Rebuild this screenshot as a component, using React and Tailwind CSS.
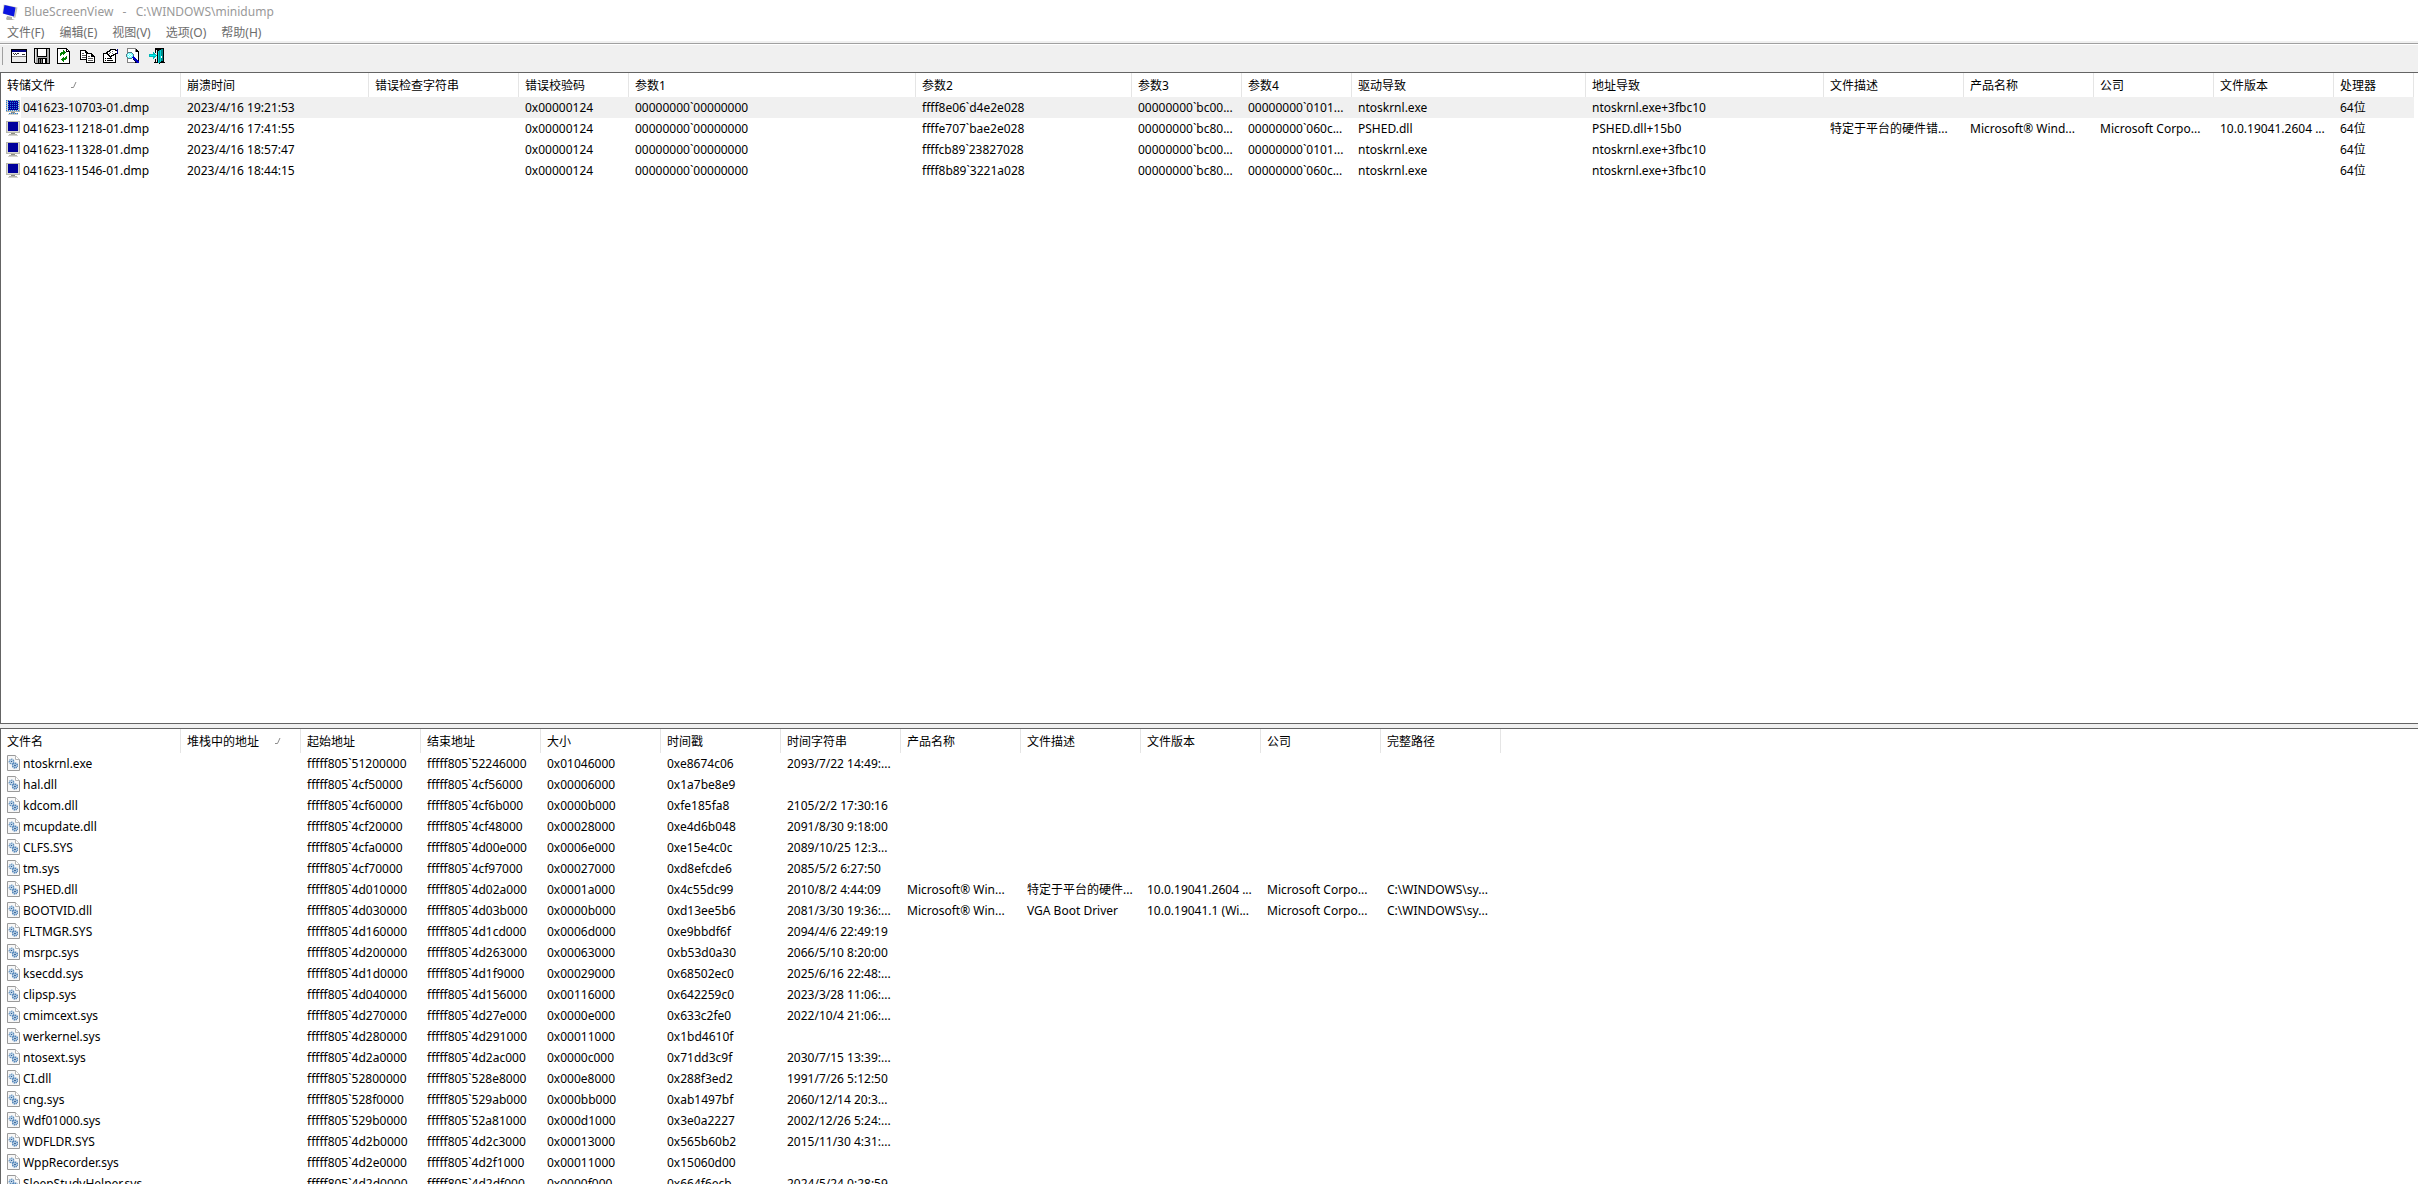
const DUMP_COLUMNS = [
  { label: '转储文件', width: 'w-[180px]', sorted: true },
  { label: '崩溃时间', width: 'w-[188px]' },
  { label: '错误检查字符串', width: 'w-[150px]' },
  { label: '错误校验码', width: 'w-[110px]' },
  { label: '参数1', width: 'w-[287px]' },
  { label: '参数2', width: 'w-[216px]' },
  { label: '参数3', width: 'w-[110px]' },
  { label: '参数4', width: 'w-[110px]' },
  { label: '驱动导致', width: 'w-[234px]' },
  { label: '地址导致', width: 'w-[238px]' },
  { label: '文件描述', width: 'w-[140px]' },
  { label: '产品名称', width: 'w-[130px]' },
  { label: '公司', width: 'w-[120px]' },
  { label: '文件版本', width: 'w-[120px]' },
  { label: '处理器', width: 'w-[80px]' },
];

const DUMPS = [
  ['041623-10703-01.dmp', '2023/4/16 19:21:53', '', '0x00000124', '00000000`00000000', 'ffff8e06`d4e2e028', '00000000`bc00...', '00000000`0101...', 'ntoskrnl.exe', 'ntoskrnl.exe+3fbc10', '', '', '', '', '64位'],
  ['041623-11218-01.dmp', '2023/4/16 17:41:55', '', '0x00000124', '00000000`00000000', 'ffffe707`bae2e028', '00000000`bc80...', '00000000`060c...', 'PSHED.dll', 'PSHED.dll+15b0', '特定于平台的硬件错...', 'Microsoft® Wind...', 'Microsoft Corpo...', '10.0.19041.2604 ...', '64位'],
  ['041623-11328-01.dmp', '2023/4/16 18:57:47', '', '0x00000124', '00000000`00000000', 'ffffcb89`23827028', '00000000`bc00...', '00000000`0101...', 'ntoskrnl.exe', 'ntoskrnl.exe+3fbc10', '', '', '', '', '64位'],
  ['041623-11546-01.dmp', '2023/4/16 18:44:15', '', '0x00000124', '00000000`00000000', 'ffff8b89`3221a028', '00000000`bc80...', '00000000`060c...', 'ntoskrnl.exe', 'ntoskrnl.exe+3fbc10', '', '', '', '', '64位'],
];

const DRIVER_COLUMNS = [
  { label: '文件名', width: 'w-[180px]' },
  { label: '堆栈中的地址', width: 'w-[120px]', sorted: true },
  { label: '起始地址', width: 'w-[120px]' },
  { label: '结束地址', width: 'w-[120px]' },
  { label: '大小', width: 'w-[120px]' },
  { label: '时间戳', width: 'w-[120px]' },
  { label: '时间字符串', width: 'w-[120px]' },
  { label: '产品名称', width: 'w-[120px]' },
  { label: '文件描述', width: 'w-[120px]' },
  { label: '文件版本', width: 'w-[120px]' },
  { label: '公司', width: 'w-[120px]' },
  { label: '完整路径', width: 'w-[120px]' },
];

const DRIVERS = [
  ['ntoskrnl.exe', '', 'fffff805`51200000', 'fffff805`52246000', '0x01046000', '0xe8674c06', '2093/7/22 14:49:...'],
  ['hal.dll', '', 'fffff805`4cf50000', 'fffff805`4cf56000', '0x00006000', '0x1a7be8e9', ''],
  ['kdcom.dll', '', 'fffff805`4cf60000', 'fffff805`4cf6b000', '0x0000b000', '0xfe185fa8', '2105/2/2 17:30:16'],
  ['mcupdate.dll', '', 'fffff805`4cf20000', 'fffff805`4cf48000', '0x00028000', '0xe4d6b048', '2091/8/30 9:18:00'],
  ['CLFS.SYS', '', 'fffff805`4cfa0000', 'fffff805`4d00e000', '0x0006e000', '0xe15e4c0c', '2089/10/25 12:3...'],
  ['tm.sys', '', 'fffff805`4cf70000', 'fffff805`4cf97000', '0x00027000', '0xd8efcde6', '2085/5/2 6:27:50'],
  ['PSHED.dll', '', 'fffff805`4d010000', 'fffff805`4d02a000', '0x0001a000', '0x4c55dc99', '2010/8/2 4:44:09', 'Microsoft® Win...', '特定于平台的硬件...', '10.0.19041.2604 ...', 'Microsoft Corpo...', 'C:\\WINDOWS\\sy...'],
  ['BOOTVID.dll', '', 'fffff805`4d030000', 'fffff805`4d03b000', '0x0000b000', '0xd13ee5b6', '2081/3/30 19:36:...', 'Microsoft® Win...', 'VGA Boot Driver', '10.0.19041.1 (Wi...', 'Microsoft Corpo...', 'C:\\WINDOWS\\sy...'],
  ['FLTMGR.SYS', '', 'fffff805`4d160000', 'fffff805`4d1cd000', '0x0006d000', '0xe9bbdf6f', '2094/4/6 22:49:19'],
  ['msrpc.sys', '', 'fffff805`4d200000', 'fffff805`4d263000', '0x00063000', '0xb53d0a30', '2066/5/10 8:20:00'],
  ['ksecdd.sys', '', 'fffff805`4d1d0000', 'fffff805`4d1f9000', '0x00029000', '0x68502ec0', '2025/6/16 22:48:...'],
  ['clipsp.sys', '', 'fffff805`4d040000', 'fffff805`4d156000', '0x00116000', '0x642259c0', '2023/3/28 11:06:...'],
  ['cmimcext.sys', '', 'fffff805`4d270000', 'fffff805`4d27e000', '0x0000e000', '0x633c2fe0', '2022/10/4 21:06:...'],
  ['werkernel.sys', '', 'fffff805`4d280000', 'fffff805`4d291000', '0x00011000', '0x1bd4610f', ''],
  ['ntosext.sys', '', 'fffff805`4d2a0000', 'fffff805`4d2ac000', '0x0000c000', '0x71dd3c9f', '2030/7/15 13:39:...'],
  ['CI.dll', '', 'fffff805`52800000', 'fffff805`528e8000', '0x000e8000', '0x288f3ed2', '1991/7/26 5:12:50'],
  ['cng.sys', '', 'fffff805`528f0000', 'fffff805`529ab000', '0x000bb000', '0xab1497bf', '2060/12/14 20:3...'],
  ['Wdf01000.sys', '', 'fffff805`529b0000', 'fffff805`52a81000', '0x000d1000', '0x3e0a2227', '2002/12/26 5:24:...'],
  ['WDFLDR.SYS', '', 'fffff805`4d2b0000', 'fffff805`4d2c3000', '0x00013000', '0x565b60b2', '2015/11/30 4:31:...'],
  ['WppRecorder.sys', '', 'fffff805`4d2e0000', 'fffff805`4d2f1000', '0x00011000', '0x15060d00', ''],
  ['SleepStudyHelper.sys', '', 'fffff805`4d2d0000', 'fffff805`4d2df000', '0x0000f000', '0x664f6ecb', '2024/5/24 0:28:59'],
];

const MENUS = ['文件(F)', '编辑(E)', '视图(V)', '选项(O)', '帮助(H)'];

const Icon = ({ children }) => (
  <svg width="16" height="16" viewBox="0 0 16 16" shapeRendering="crispEdges" className="block shrink-0" aria-hidden="true">
    {children}
  </svg>
);

const AppIcon = () => (
  <svg width="16" height="16" viewBox="0 0 16 16" className="block shrink-0" aria-hidden="true">
    <path d="M5 12l5 1v2l3 1H5l-1-1z" fill="#b0b0a8" />
    <path d="M13.500 3l2 .5-2 10-2 .5z" fill="#c4c4bc" />
    <path d="M1.500 0.500L14 3l-1.500 10L0.500 9.500z" fill="#d2d2c8" />
    <path d="M2.500 1L13.500 3.500l-1.500 9L1 9.500z" fill="#0a14e0" />
  </svg>
);

const DumpIcon = ({ selected }) => (
  <Icon>
    <path d="M1 1h14v12H1z" fill="#b9b9ae" />
    <path d="M2 2h12v10H2z" fill="#d8d8d0" />
    <path d="M3 2h10v9H3z" fill="#00009c" />
    <path d="M6 13h4v1H6z" fill="#8c8c84" />
    <path d="M4 14h8v1H4z" fill="#b4b4ac" />
    <path d="M3 15h10v1H3z" fill="#d4d4cc" />
    {selected && (
      <>
        <path d="M1 1.500h14M1 3.500h14M1 5.500h14M1 7.500h14M1 9.500h14M1 11.500h14M4 14.500h9" stroke="#2a7fd8" strokeDasharray="1 1" />
      </>
    )}
  </Icon>
);

const DriverIcon = () => (
  <svg width="16" height="16" viewBox="0 0 16 16" className="block shrink-0" aria-hidden="true">
    <path d="M2.500 0.500h8l4 4v11h-12z" fill="#f7f7f7" stroke="#9a9a9a" />
    <path d="M10.500 0.500v4h4" fill="#fff" stroke="#b4b4b4" />
    <circle cx="6.500" cy="6.500" r="2.200" fill="#dcebf7" stroke="#5f8fbe" strokeWidth="1.400" strokeDasharray="1.200 0.600" />
    <circle cx="6.500" cy="6.500" r="0.800" fill="#2f5f96" />
    <circle cx="10" cy="10.500" r="2.400" fill="#dcebf7" stroke="#3f76b0" strokeWidth="1.400" strokeDasharray="1.200 0.500" />
    <circle cx="10" cy="10.500" r="0.900" fill="#24538a" />
  </svg>
);

const WindowIcon = () => (
  <Icon>
    <path d="M0 1h16v14H0z" fill="#000" />
    <path d="M1 4h14v10H1z" fill="#fff" />
    <path d="M1 2h14v2H1z" fill="#000080" />
    <path d="M2 5h1v1H2zM4 5h1v1H4zM6 5h2v1H6zM3 6h1v1H3zM5 6h1v1H5zM11 6h3v1h-3z" fill="#333" />
    <path d="M1 8h14v1H1z" fill="#808080" />
    <path d="M1 9h14v5H1z" fill="#ececec" />
  </Icon>
);

const SaveIcon = () => (
  <Icon>
    <path d="M0 0h16v16H1v-1H0z" fill="#000" />
    <path d="M1 1h14v14H1z" fill="#a8a8a8" />
    <path d="M1 1h1v13H1z" fill="#e4e4e4" />
    <path d="M3 0h10v9H3z" fill="#000" />
    <path d="M4 1h8v7H4z" fill="#fff" />
    <path d="M4 10h9v5H4z" fill="#000" />
    <path d="M5 11h1v4H5zM7 11h1v4H7z" fill="#808080" />
    <path d="M9 11h2v4H9z" fill="#fff" />
  </Icon>
);

const RefreshIcon = () => (
  <Icon>
    <path d="M0 0h10v1h1v1h1v1h1v13H0z" fill="#000" />
    <path d="M1 1h8v3h3v11H1z" fill="#fff" />
    <path d="M10 2h1v1h-1z" fill="#fff" />
    <path d="M3 5h1V4h2V2h1v1h1v1h1v1H8v1H7v1H6V6H5v1H4v1H3z" fill="#008000" />
    <path d="M10 11H9v1H7v2H6v-1H5v-1H4v-1h1v-1h1V9h1v1h1V9h1V8h1z" fill="#008000" />
  </Icon>
);

const CopyIcon = () => (
  <Icon>
    <path d="M0 2h6v1h1v1h1v8H0z" fill="#000" />
    <path d="M1 3h4v2h2v6H1z" fill="#fff" />
    <path d="M2 5h2v1H2zM2 7h4v1H2zM2 9h4v1H2z" fill="#555" />
    <path d="M6 5h6v1h1v1h1v1h1v7H6z" fill="#000" />
    <path d="M7 6h4v3h3v5H7z" fill="#fff" />
    <path d="M8 8h2v1H8zM8 10h5v1H8zM8 12h5v1H8z" fill="#555" />
  </Icon>
);

const PropertiesIcon = () => (
  <Icon>
    <path d="M0 5h13v10H0z" fill="#000" />
    <path d="M1 6h11v8H1z" fill="#fff" />
    <path d="M2 10h1v1H2zM4 10h5v1H4zM2 12h1v1H2zM4 12h6v1H4z" fill="#000" />
    <path d="M7 1h6v1h1V1h1v5h-2v1h-2v1H9v1H8v1H7V9H6V8H5V7H4V6H3V4h1V3h2V2h1z" fill="#000" />
    <path d="M8 2h4v1h2v2h-2v1h-2v1H8v1H7V7H6V6H5V4h2V3h1z" fill="#fff" />
    <path d="M7 4h1v1H7zM9 3h1v1H9zM9 5h1v1H9zM6 5h1v1H6z" fill="#666" />
    <path d="M14 1h1v5h-1z" fill="#000080" />
  </Icon>
);

const FindIcon = () => (
  <Icon>
    <path d="M1 0h9v1h1v1h1v1h1v12H1z" fill="#808080" />
    <path d="M2 1h7v3h3v10H2z" fill="#fff" />
    <path d="M10 1h1v1h1v1h1v12h-4v-1h3V4h-2z" fill="#000" />
    <path d="M2 4h4v1h1v1h1v3H7v1H6v1H2v-1H1V9H0V6h1V5h1z" fill="#507c88" />
    <path d="M2 5h4v1h1v3H6v1H2V9H1V6h1z" fill="#7ff" />
    <path d="M2 6h1v1H2zM4 6h1v1H4zM3 7h1v1H3zM5 7h1v1H5zM2 8h1v1H2zM4 8h1v1H4z" fill="#fff" />
    <path d="M7 8h1v1h1v1h1v1h1v1h1v1h1v2h-2v-1h-1v-1H9v-1H8v-1H7v-1H6V9h1z" fill="#0000c8" />
    <path d="M7 11h1v1h1v1h1v1h1v1h-1v-1H9v-1H8v-1H7z" fill="#000050" />
  </Icon>
);

const ExitIcon = () => (
  <Icon>
    <path d="M6 0h9v14h1v1h-5v1h-1v-1H5v-1h1v-3h1v3h1V2H7v3H6z" fill="#000" />
    <path d="M9 3h1V2h2V1h2v12h-2v1h-1v1H9z" fill="#008c8c" />
    <path d="M9 3h1v12H9zM11 2h1v12h-1z" fill="#00d8d8" />
    <path d="M12 8h1v2h-1z" fill="#fff" />
    <path d="M4 4h1v1h1v1h1v1h1v1H7v1H6v1H5v1H4V9H0V6h4z" fill="#00b8b8" />
    <path d="M1 7h6v1H1z" fill="#00f0f0" />
  </Icon>
);

const TOOLS = [
  { label: '高级选项', icon: WindowIcon },
  { label: '保存', icon: SaveIcon },
  { label: '刷新', icon: RefreshIcon },
  { label: '复制', icon: CopyIcon },
  { label: '属性', icon: PropertiesIcon },
  { label: '查找', icon: FindIcon },
  { label: '退出', icon: ExitIcon },
];

const ListView = ({ label, columns, rows, icon: RowIcon, selectedIndex }) => (
  <table aria-label={label} className="w-px table-fixed border-collapse text-left leading-[21px] whitespace-nowrap">
    <colgroup>
      {columns.map((col) => <col key={col.label} className={col.width} />)}
    </colgroup>
    <thead>
      <tr className="h-6">
        {columns.map((col) => (
          <th key={col.label} scope="col" className="p-0 font-normal">
            <button type="button" className="flex h-6 w-full items-center gap-4 border-r border-[#e5e5e5] pl-1.5">
              {col.label}
              {col.sorted && (
                <svg width="6" height="8" viewBox="0 0 6 8" fill="none" stroke="#8c8c8c" aria-hidden="true">
                  <path d="M5 1L2.500 6.500H0" />
                </svg>
              )}
            </button>
          </th>
        ))}
      </tr>
    </thead>
    <tbody>
      {rows.map((row, i) => {
        const selected = i === selectedIndex;
        return (
          <tr key={row[0]} className="h-[21px]">
            {columns.map((col, c) => (c === 0 ? (
              <td key={col.label} className="p-0">
                <div className="flex h-[21px] items-start pl-1">
                  <div className="pt-0.5"><RowIcon selected={selected} /></div>
                  <span className={selected ? 'flex-1 bg-[#f0f0f0] pl-0.5' : 'flex-1 pl-0.5'}>{row[0]}</span>
                </div>
              </td>
            ) : (
              <td key={col.label} className={selected ? 'bg-[#f0f0f0] py-0 pr-0 pl-1.5' : 'py-0 pr-0 pl-1.5'}>
                {row[c]}
              </td>
            )))}
          </tr>
        );
      })}
    </tbody>
  </table>
);

const App = () => (
  <div className="flex h-screen flex-col overflow-hidden bg-[#f0f0f0] font-['Noto_Sans','Noto_Sans_CJK_SC',sans-serif] text-xs text-black [font-variant-ligatures:none]">
    <header className="flex h-6 shrink-0 items-center gap-1 bg-white pl-0.5">
      <AppIcon />
      <h1 className="flex gap-[3px] whitespace-pre pl-0.5 text-[#999]">
        <span>{'BlueScreenView  '}</span>
        <span>{'-  '}</span>
        <span>{'C:\\WINDOWS\\minidump'}</span>
      </h1>
    </header>

    <nav className="flex h-[17px] shrink-0 items-center gap-[15px] bg-white pl-[7px] text-[#6d6d6d]">
      {MENUS.map((menu) => <button key={menu} type="button">{menu}</button>)}
    </nav>

    <div className="mt-0.5 h-0.5 shrink-0 border-t border-[#a0a0a0] bg-white" />

    <div role="toolbar" className="flex h-[27px] shrink-0 items-start pt-0.5 pl-0.5">
      <div className="mr-2 h-[18px] w-px bg-[#a0a0a0]" />
      <div className="flex gap-[7px] pt-px">
        {TOOLS.map(({ label, icon: ToolIcon }) => (
          <button key={label} type="button" aria-label={label}><ToolIcon /></button>
        ))}
      </div>
    </div>

    <main className="flex min-h-0 flex-1 flex-col gap-1">
      <section className="min-h-0 flex-[163] overflow-hidden border-y border-l border-[#646464] bg-white">
        <ListView label="转储文件" columns={DUMP_COLUMNS} rows={DUMPS} icon={DumpIcon} selectedIndex={0} />
      </section>
      <section className="min-h-0 flex-[114] overflow-hidden border-t border-l border-[#646464] bg-white">
        <ListView label="驱动程序" columns={DRIVER_COLUMNS} rows={DRIVERS} icon={DriverIcon} selectedIndex={-1} />
      </section>
    </main>
  </div>
);

export default App;
